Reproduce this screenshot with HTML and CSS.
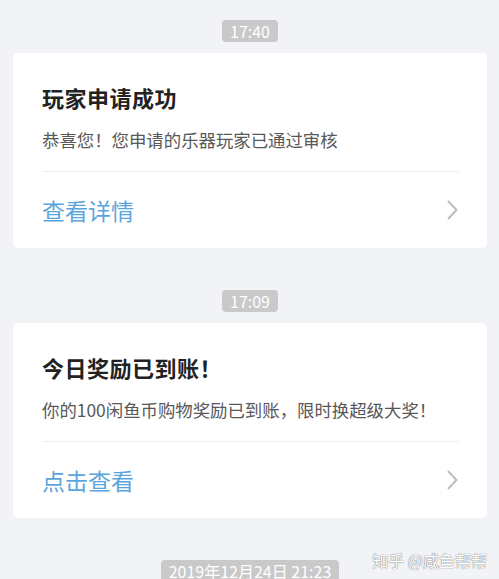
FILE: index.html
```html
<!DOCTYPE html>
<html>
<head>
  <meta charset="utf-8">
  <title>消息通知</title>
  <link rel="stylesheet" href="styles.css">
</head>
<body>
  <div class="feed">
    <div class="msg">
      <span class="time">17:40</span>
      <div class="card">
        <h2 class="card-title">玩家申请成功</h2>
        <p class="card-text">恭喜您！您申请的乐器玩家已通过审核</p>
        <a class="card-link" href="#">
          <span>查看详情</span>
          <svg class="chevron" width="14" height="22" viewBox="0 0 14 22"><polyline points="3,2 11.5,11 3,20" /></svg>
        </a>
      </div>
    </div>

    <div class="msg">
      <span class="time">17:09</span>
      <div class="card">
        <h2 class="card-title">今日奖励已到账！</h2>
        <p class="card-text">你的100闲鱼币购物奖励已到账，限时换超级大奖！</p>
        <a class="card-link" href="#">
          <span>点击查看</span>
          <svg class="chevron" width="14" height="22" viewBox="0 0 14 22"><polyline points="3,2 11.5,11 3,20" /></svg>
        </a>
      </div>
    </div>

    <div class="msg">
      <span class="time">2019年12月24日 21:23</span>
    </div>
  </div>

  <div class="watermark">知乎 @咸鱼帮帮</div>
</body>
</html>
```

FILE: styles.css
```css
body {
  margin: 0;
  padding: 0;
  background-color: #f2f3f7;
  font-family: "Noto Sans CJK SC", "Noto Sans", sans-serif;
  overflow: hidden;
}

.feed {
  padding: 20px 12px 0 13px;
}

.msg {
  display: flex;
  flex-direction: column;
  align-items: center;
  margin-bottom: 42px;
}

.time {
  display: inline-block;
  height: 22px;
  line-height: 22px;
  padding: 0 8px;
  font-size: 16px;
  color: #fff;
  background-color: #c9c9c9;
  border-radius: 4px;
  margin-bottom: 11px;
}

.card {
  align-self: stretch;
  background-color: #fff;
  border-radius: 5px;
  padding: 29px 28px 0 29px;
}

.card-title {
  margin: 0;
  font-size: 22px;
  line-height: 30px;
  letter-spacing: 0.5px;
  font-weight: bold;
  color: #222;
}

.card-text {
  margin: 16px 0 0 0;
  padding-bottom: 19px;
  font-size: 17.4px;
  line-height: 24px;
  color: #585858;
  border-bottom: 1px solid #efefef;
  white-space: nowrap;
}

.card-link {
  display: flex;
  justify-content: space-between;
  align-items: center;
  height: 76px;
  font-size: 23px;
  color: #5ba5dc;
  text-decoration: none;
}

.chevron polyline {
  fill: none;
  stroke: #bdbdbd;
  stroke-width: 2;
}

.watermark {
  position: absolute;
  top: 548px;
  right: 12px;
  font-size: 16px;
  color: #fff;
  text-shadow: 0 0 1px #777, 0 0 1px #777;
}
```
